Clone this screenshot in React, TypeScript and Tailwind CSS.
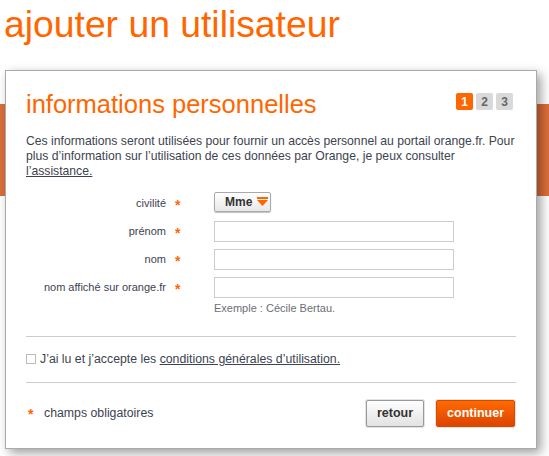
import React from "react";

const Star = () => (
  <span className="text-[#ff6600] font-bold text-[14px] leading-none">*</span>
);

export default function App() {
  const rows = [
    { label: "civilité", type: "select" },
    { label: "prénom", type: "input" },
    { label: "nom", type: "input" },
    { label: "nom affiché sur orange.fr", type: "input" },
  ];
  return (
    <div className="w-[549px] h-[456px] bg-white overflow-hidden font-['Liberation_Sans',Arial,sans-serif] text-[#3d4350]">
      <h1 className="text-[37.3px] leading-[42px] text-[#ff6600] pl-[4px] pt-[3px]">
        ajouter un utilisateur
      </h1>
      <div className="relative mt-[25px]">
        <div className="absolute left-0 right-0 top-[34px] h-[92px] bg-[#dc6d3b]" />
        <div className="relative ml-[5px] w-[532px] border border-[#aaaaaa] bg-white shadow-[4px_4px_10px_rgba(0,0,0,0.38)] px-[20px] pt-[18px] pb-[20px]">
          <div className="flex items-start justify-between">
            <h2 className="text-[25.5px] leading-[30px] text-[#ff6600]">
              informations personnelles
            </h2>
            <div className="flex gap-[3px] mt-[4px] mr-[3px]">
              <span className="w-[17px] h-[17px] flex items-center justify-center bg-[#ff6600] text-white text-[12px] font-bold rounded-[2px]">1</span>
              <span className="w-[17px] h-[17px] flex items-center justify-center bg-[#d9d9d9] text-[#666] text-[12px] font-bold rounded-[2px]">2</span>
              <span className="w-[17px] h-[17px] flex items-center justify-center bg-[#d9d9d9] text-[#666] text-[12px] font-bold rounded-[2px]">3</span>
            </div>
          </div>
          <p className="mt-[15px] text-[12.2px] leading-[15px]">
            Ces informations seront utilisées pour fournir un accès personnel au portail orange.fr. Pour plus d’information sur l’utilisation de ces données par Orange, je peux consulter{" "}
            <a className="underline">l’assistance.</a>
          </p>
          <div className="mt-[10px] flex flex-col">
            {rows.map((r) => (
              <div key={r.label} className="flex items-center h-[28px]">
                <div className="w-[140px] text-right text-[11px]">{r.label}</div>
                <div className="w-[48px] pl-[9px] flex items-center pt-[4px]">
                  <Star />
                </div>
                {r.type === "select" ? (
                  <div className="w-[57px] h-[20px] mb-[3px] border border-[#aaaaaa] rounded-[2px] bg-gradient-to-b from-white to-[#e8e8e8] shadow-[0_1px_1px_rgba(0,0,0,0.25)] flex items-center pl-[10px] gap-[5px]">
                    <span className="text-[12px] font-bold text-[#333]">Mme</span>
                    <svg width="11" height="10" viewBox="0 0 11 10">
                      <rect x="0" y="0" width="11" height="2" fill="#ff6600" />
                      <polygon points="0,3 11,3 5.5,9" fill="#ff6600" />
                    </svg>
                  </div>
                ) : (
                  <div className="w-[240px] h-[21px] border border-[#cccccc] bg-white" />
                )}
              </div>
            ))}
            <div className="pl-[188px] text-[11px] leading-[14px] text-[#6b6e75]">
              Exemple : Cécile Bertau.
            </div>
          </div>
          <div className="mt-[21px] h-px bg-[#cccccc]" />
          <div className="mt-[14px] h-[16px] flex items-center text-[12.3px]">
            <span className="w-[10px] h-[10px] border border-[#bbbbbb] bg-white mr-[4px]" />
            <span>
              J’ai lu et j’accepte les <a className="underline">conditions générales d’utilisation.</a>
            </span>
          </div>
          <div className="mt-[15px] h-px bg-[#cccccc]" />
          <div className="mt-[16px] flex items-center justify-between">
            <div className="flex items-center text-[12.3px]">
              <span className="ml-[2px] w-[16px] pt-[4px]"><Star /></span>
              <span>champs obligatoires</span>
            </div>
            <div className="flex gap-[10px]">
              <button className="h-[29px] p-[1px] rounded-[3px] bg-[#e3e3e3]">
                <span className="h-[27px] px-[10px] flex items-center border border-[#999] rounded-[2px] bg-gradient-to-b from-white to-[#e2e2e2] text-[12.5px] font-bold text-[#333]">retour</span>
              </button>
              <button className="h-[29px] p-[1px] rounded-[3px] bg-[#e3e3e3]">
                <span className="h-[27px] px-[10px] flex items-center border border-[#d94a00] rounded-[2px] bg-gradient-to-b from-[#ff6a00] to-[#dd4400] text-[12.5px] font-bold text-white">continuer</span>
              </button>
            </div>
          </div>
        </div>
      </div>
    </div>
  );
}
